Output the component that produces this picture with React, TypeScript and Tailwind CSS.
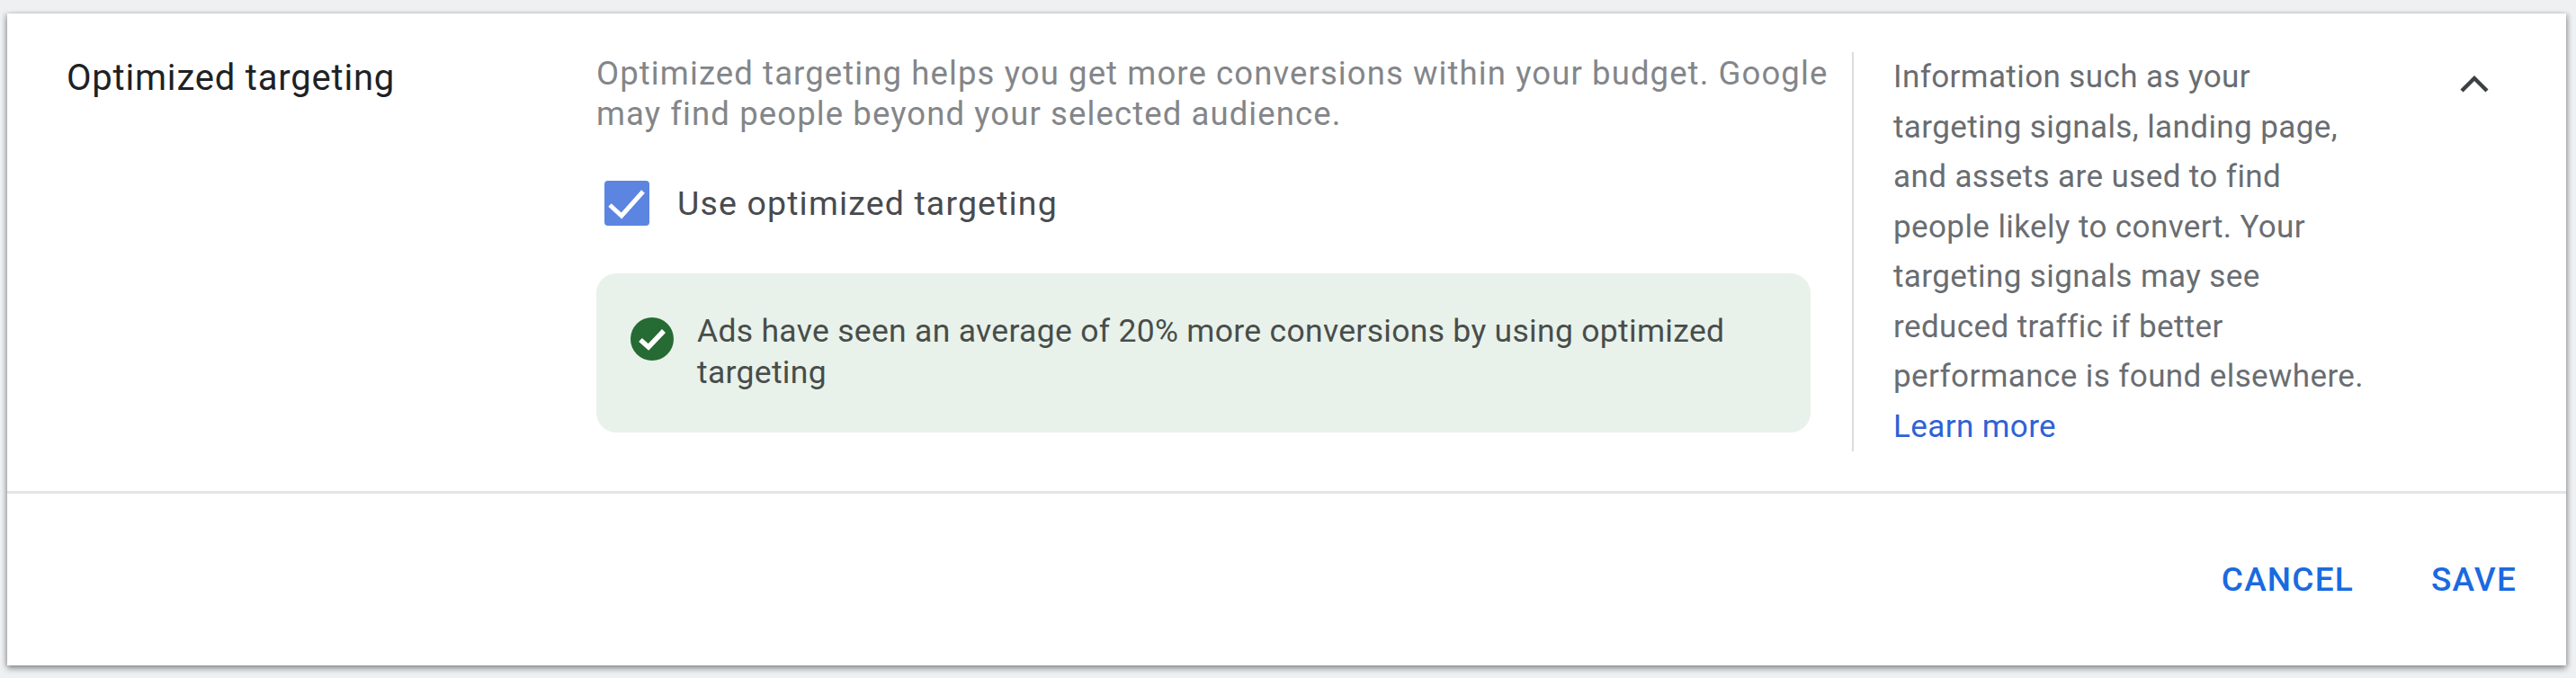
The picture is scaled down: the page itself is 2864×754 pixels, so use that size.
import React from "react";

export default function App() {
  return (
    <div className="w-[2864px] h-[754px] bg-[#eef0f2] pt-[15px] pl-2 overflow-hidden font-['Roboto',sans-serif]">
      <div className="w-[2845px] h-[725px] bg-white flex flex-col shadow-[0_4px_6px_rgba(60,64,67,0.45),-3px_0_4px_rgba(60,64,67,0.18),3px_0_4px_rgba(60,64,67,0.18)]">
        <div className="h-[534px] flex border-b-[3px] border-[#e4e5e6] shrink-0">
          <div className="w-[655px] pl-[66px] pt-[46px] text-[40px] tracking-[0.8px] leading-[52px] text-[#202124] shrink-0">Optimized targeting</div>
          <div className="w-[1398px] shrink-0 border-r-2 border-[#dadce0] mt-[43px] mb-[44px]">
            <div className="pt-[1px] text-[36.5px] tracking-[1.1px] leading-[45px] text-[#838689] w-[1376px]">
              Optimized targeting helps you get more conversions within your budget. Google may find people beyond your selected audience.
            </div>
            <div className="flex items-center mt-[52px] ml-[9px] h-[50px]">
              <div className="w-[50px] h-[50px] rounded-[4px] bg-[#5b85e0] shrink-0">
                <svg width="50" height="50" viewBox="0 0 50 50" fill="none" stroke="#fff" strokeWidth="5"><path d="M6 27 L19 39 L43 12" /></svg>
              </div>
              <span className="ml-[31px] text-[37.5px] tracking-[1.15px] leading-[50px] text-[#484b4e]">Use optimized targeting</span>
            </div>
            <div className="mt-[53px] w-[1350px] h-[177px] rounded-[22px] bg-[#e8f2ea] flex pl-[38px] pt-[41px]">
              <svg className="shrink-0 mt-[8px]" width="48" height="48" viewBox="0 0 48 48">
                <circle cx="24" cy="24" r="24" fill="#256b33" />
                <path d="M11 25 L20 33 L37 15" fill="none" stroke="#fff" strokeWidth="5.5" />
              </svg>
              <div className="ml-[26px] w-[1240px] text-[35.5px] tracking-[0.3px] leading-[46px] text-[#484d4b]">
                Ads have seen an average of 20% more conversions by using optimized targeting
              </div>
            </div>
          </div>
          <div className="w-[590px] shrink-0 pl-[44px] pt-[43px] pr-[10px] text-[35px] tracking-[0.4px] leading-[55.5px] text-[#696d71]">
            <div className="w-[536px]">
              Information such as your targeting signals, landing page, and assets are used to find people likely to convert. Your targeting signals may see reduced traffic if better performance is found elsewhere.{" "}
              <span className="text-[#2f62d5]">Learn more</span>
            </div>
          </div>
          <div className="flex-1 flex justify-center pt-[43px] pr-[2px]">
            <svg width="48" height="48" viewBox="0 0 24 24" fill="none" stroke="#3c4043" strokeWidth="2.2" className="mt-[12px]">
              <path d="M5 15.5 L12 8.5 L19 15.5" />
            </svg>
          </div>
        </div>
        <div className="flex-1 flex justify-end items-center gap-[86px] pr-[55px] text-[#1a6ae0] text-[37px] font-medium tracking-[1.2px]">
          <span>CANCEL</span>
          <span>SAVE</span>
        </div>
      </div>
    </div>
  );
}
